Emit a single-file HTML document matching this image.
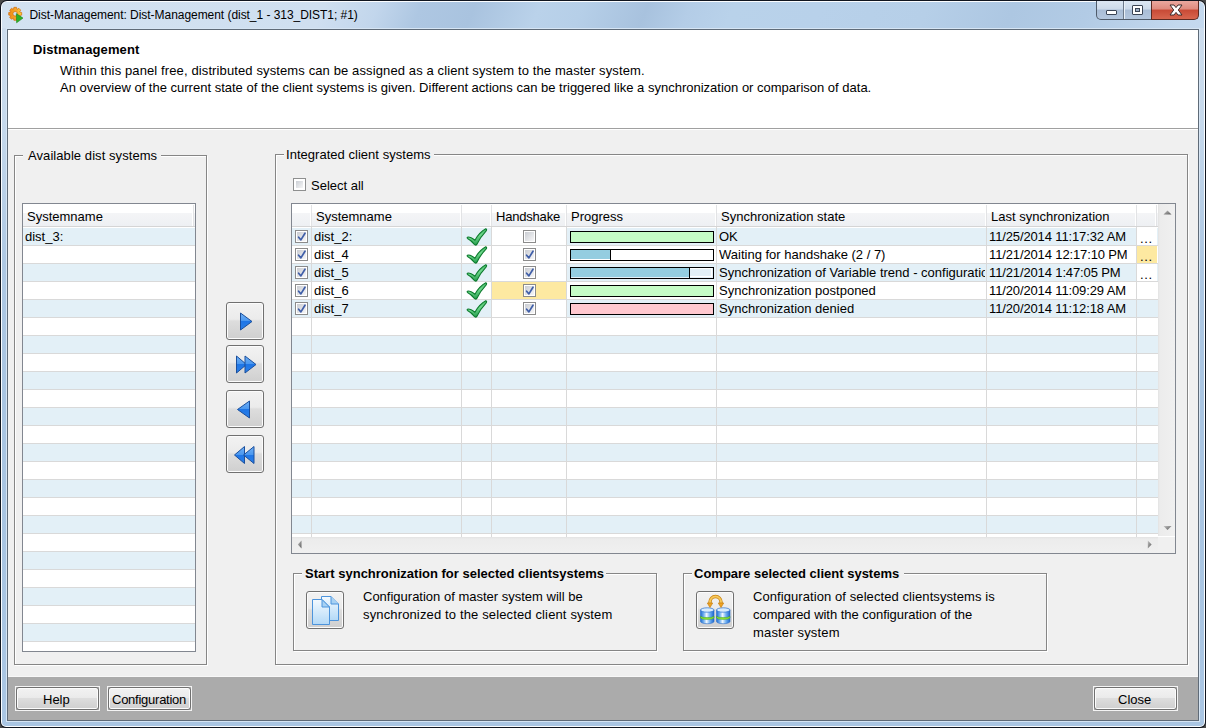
<!DOCTYPE html>
<html><head><meta charset="utf-8">
<style>
html,body{margin:0;padding:0;width:1206px;height:728px;overflow:hidden;background:#4a4a4a;}
*{box-sizing:border-box;}
.a{position:absolute;}
.t{position:absolute;white-space:pre;font-family:"Liberation Sans",sans-serif;font-size:13px;line-height:15px;color:#000;}
.b{font-weight:bold;}
#win{position:absolute;left:0;top:0;width:1206px;height:728px;border-radius:7px 7px 6px 6px;background:#10151f;}
#frame{position:absolute;left:1px;top:1px;width:1204px;height:726px;border-radius:6px 6px 5px 5px;background:#fbfdff;}
#fin{position:absolute;left:2px;top:2px;width:1202px;height:724px;border-radius:5px 5px 4px 4px;
 background:linear-gradient(#cfdeee 0px,#c6d9ec 120px,#aec8e3 260px,#a9c5e2 400px,#aac6e3 728px);}
#tbar{position:absolute;left:2px;top:2px;width:1202px;height:26px;border-radius:5px 5px 0 0;
 background:linear-gradient(112deg,#d3e2f1 0px,#cfdff0 300px,#c2d6ec 350px,#aec7e2 390px,#a9c3df 440px,#bad2ea 500px,#b6cfe8 540px,#a8c2de 600px,#b4cde7 640px,#b9d2ea 680px,#b8d1ea 760px,#b6cfe8 860px,#adc7e2 940px,#b2cbe5 1010px,#c3d8ee 1100px,#cbddf0 1206px);}
#tglow{position:absolute;left:2px;top:27px;width:1202px;height:1px;background:linear-gradient(90deg,#e2ecf6,#d4e3f2 50%,#dae7f4);}
#lite{position:absolute;left:6px;top:28px;width:1194px;height:694px;background:#d6e5f4;}
#client{position:absolute;left:7px;top:29px;width:1192px;height:692px;background:#5f6b78;}
#cin{position:absolute;left:8px;top:30px;width:1190px;height:690px;background:#f0f0f0;}
.gb{position:absolute;border:1px solid #868686;box-shadow:inset 1px 1px 0 #fff,1px 1px 0 #fff;}
.lab{position:absolute;background:#f0f0f0;}
.btn{position:absolute;border:1px solid #707070;border-radius:3px;
 background:linear-gradient(#f2f2f2 0%,#ebebeb 45%,#dddddd 50%,#cfcfcf 100%);box-shadow:inset 0 0 0 1px #fcfcfc;}
.cb{position:absolute;width:13px;height:13px;border:1px solid #8e8f8f;background:#fff;}
.cb::after{content:"";position:absolute;left:2px;top:2px;width:7px;height:7px;background:linear-gradient(135deg,#cbcfd5,#f6f6f6);}
.row{position:absolute;height:18px;border-bottom:1px solid #d9d9d9;}
.vs{position:absolute;width:1px;background:#d9d9d9;}
.pb{position:absolute;height:12px;border:2px solid #000;border-width:1px 2px 2px 1px;}
</style></head><body>
<svg width="0" height="0" style="position:absolute">
<defs>
<linearGradient id="cbg" x1="0" y1="0" x2="1" y2="1"><stop offset="0" stop-color="#c9ccd2"/><stop offset="1" stop-color="#f7f7f8"/></linearGradient>
<linearGradient id="chk" x1="0" y1="0" x2="0.3" y2="1"><stop offset="0" stop-color="#1e9a45"/><stop offset="0.55" stop-color="#6fd98d"/><stop offset="1" stop-color="#2aa050"/></linearGradient>
<linearGradient id="arr" x1="0" y1="0" x2="1" y2="1"><stop offset="0" stop-color="#c4c4c4"/><stop offset="1" stop-color="#5a5a5a"/></linearGradient>
<linearGradient id="tri" x1="0" y1="0" x2="0" y2="1"><stop offset="0" stop-color="#6fb0f5"/><stop offset="0.48" stop-color="#4a97ef"/><stop offset="0.5" stop-color="#1f76e6"/><stop offset="1" stop-color="#2a7fe8"/></linearGradient>
<linearGradient id="doc" x1="0" y1="0" x2="0" y2="1"><stop offset="0" stop-color="#f4faff"/><stop offset="1" stop-color="#b3d9f7"/></linearGradient>
<linearGradient id="db" x1="0" y1="0" x2="1" y2="0"><stop offset="0" stop-color="#1d6ad0"/><stop offset="0.25" stop-color="#78b4f0"/><stop offset="0.45" stop-color="#f0f8ff"/><stop offset="0.7" stop-color="#6fb0f2"/><stop offset="1" stop-color="#1a64cc"/></linearGradient>
</defs></svg>
<div id="win"><div id="frame"></div><div id="fin"></div><div id="tbar"></div><div id="lite"></div></div>

<!-- title icon -->
<svg class="a" style="left:0px;top:0px" width="30" height="30" viewBox="0 0 30 30">
 <defs><linearGradient id="gear" x1="0" y1="0" x2="1" y2="0"><stop offset="0" stop-color="#f08a14"/><stop offset="0.6" stop-color="#f7a928"/><stop offset="1" stop-color="#ffd23a"/></linearGradient></defs>
 <path d="M13.47,9.21 L13.89,7.33 L16.51,7.33 L16.93,9.21 L17.22,9.34 L18.85,8.30 L20.70,10.15 L19.66,11.78 L19.79,12.07 L21.67,12.49 L21.67,15.11 L19.79,15.53 L19.66,15.82 L20.70,17.45 L18.85,19.30 L17.22,18.26 L16.93,18.39 L16.51,20.27 L13.89,20.27 L13.47,18.39 L13.18,18.26 L11.55,19.30 L9.70,17.45 L10.74,15.82 L10.61,15.53 L8.73,15.11 L8.73,12.49 L10.61,12.07 L10.74,11.78 L9.70,10.15 L11.55,8.30 L13.18,9.34 Z M17.50,13.80 A2.3,2.3 0 1 0 12.90,13.80 A2.3,2.3 0 1 0 17.50,13.80 Z" fill="url(#gear)" fill-rule="evenodd" stroke="#d06a08" stroke-width="0.7" stroke-linejoin="round"/>
 <path d="M16.3,13.6 L23,18.1 L16.6,22.8 Z" fill="#2fb026" stroke="#1d8a1a" stroke-width="0.6" stroke-linejoin="round"/>
</svg>
<div class="t" style="left:29.5px;top:8px;font-size:12px;letter-spacing:-0.045px;color:#000">Dist-Management: Dist-Management (dist_1 - 313_DIST1; #1)</div>

<!-- caption buttons -->
<div class="a" style="left:1096px;top:1px;width:56px;height:19px;border:1px solid #4f5b6a;border-top:none;border-radius:0 0 0 5px;overflow:hidden;background:linear-gradient(#dce7f3 0%,#ccdaea 45%,#a9bdd6 50%,#b4c7de 100%);"></div>
<div class="a" style="left:1123px;top:1px;width:1px;height:18px;background:#6d7a8b;"></div>
<div class="a" style="left:1124px;top:1px;width:1px;height:18px;background:#e9f0f7;"></div>
<div class="a" style="left:1151px;top:1px;width:48px;height:19px;border:1px solid #5d2a22;border-top:none;border-radius:0 0 5px 0;background:linear-gradient(#eaa89f 0%,#df8a7e 45%,#c84a36 50%,#d8664f 100%);"></div>
<div class="a" style="left:1106px;top:10px;width:11px;height:5px;background:#fff;border:1px solid #3b4555;border-radius:1px;"></div>
<div class="a" style="left:1132px;top:5px;width:11px;height:10px;background:#fff;border:1px solid #3b4555;border-radius:1px;"></div>
<div class="a" style="left:1135px;top:8px;width:5px;height:4px;background:#9fb0c6;border:1px solid #3b4555;"></div>
<svg class="a" style="left:1168px;top:3px" width="16" height="14" viewBox="0 0 16 14">
 <path d="M2,2 L6,2 L8,4.6 L10,2 L14,2 L10.3,7 L14,12 L10,12 L8,9.4 L6,12 L2,12 L5.7,7 Z" fill="#fff" stroke="#3d2b2b" stroke-width="1" stroke-linejoin="round"/>
</svg>

<div id="client"></div>
<div id="cin"></div>

<!-- header panel -->
<div class="a" style="left:8px;top:30px;width:1190px;height:98px;background:#fff;"></div>
<div class="a" style="left:8px;top:128px;width:1190px;height:1px;background:#a0a0a0;"></div>
<div class="a" style="left:8px;top:129px;width:1190px;height:1px;background:#fff;"></div>
<div class="t b" style="left:33px;top:42px;letter-spacing:0.12px">Distmanagement</div>
<div class="t" style="left:60px;top:63px;letter-spacing:0.117px">Within this panel free, distributed systems can be assigned as a client system to the master system.</div>
<div class="t" style="left:60px;top:80px;">An overview of the current state of the client systems is given. Different actions can be triggered like a synchronization or comparison of data.</div>

<!-- footer -->
<div class="a" style="left:8px;top:676px;width:1190px;height:1px;background:#f8f8f8;"></div>
<div class="a" style="left:8px;top:677px;width:1190px;height:43px;background:#ababab;"></div>

<!-- left groupbox -->
<div class="gb" style="left:14px;top:155px;width:193px;height:510px;"></div>
<div class="lab" style="left:23px;top:150px;width:138px;height:10px;"></div>
<div class="t" style="left:28px;top:148px;letter-spacing:0.07px">Available dist systems</div>

<!-- left table -->
<div class="a" style="left:22px;top:203px;width:174px;height:449px;border:1px solid #828790;background:#fff;overflow:hidden;" id="lt"><div class="a" style="left:0px;top:0px;width:172px;height:22px;background:linear-gradient(#fff 0,#fff 9px,#f4f5f7 9px,#eef0f3 22px);"></div>
<div class="a" style="left:0px;top:22px;width:172px;height:1px;background:#d5d5d5;"></div>
<div class="a" style="left:169px;top:0px;width:1px;height:22px;background:#fff;"></div>
<div class="a" style="left:170px;top:1px;width:1px;height:21px;background:#e2e3e5;"></div>
<div class="t" style="left:4px;top:5px;">Systemname</div>
<div class="a" style="left:0px;top:24px;width:172px;height:17px;background:#e3f0f7;"></div>
<div class="a" style="left:0px;top:41px;width:172px;height:1px;background:#d9d9d9;"></div>
<div class="a" style="left:0px;top:42px;width:172px;height:17px;background:#fff;"></div>
<div class="a" style="left:0px;top:59px;width:172px;height:1px;background:#d9d9d9;"></div>
<div class="a" style="left:0px;top:60px;width:172px;height:17px;background:#e3f0f7;"></div>
<div class="a" style="left:0px;top:77px;width:172px;height:1px;background:#d9d9d9;"></div>
<div class="a" style="left:0px;top:78px;width:172px;height:17px;background:#fff;"></div>
<div class="a" style="left:0px;top:95px;width:172px;height:1px;background:#d9d9d9;"></div>
<div class="a" style="left:0px;top:96px;width:172px;height:17px;background:#e3f0f7;"></div>
<div class="a" style="left:0px;top:113px;width:172px;height:1px;background:#d9d9d9;"></div>
<div class="a" style="left:0px;top:114px;width:172px;height:17px;background:#fff;"></div>
<div class="a" style="left:0px;top:131px;width:172px;height:1px;background:#d9d9d9;"></div>
<div class="a" style="left:0px;top:132px;width:172px;height:17px;background:#e3f0f7;"></div>
<div class="a" style="left:0px;top:149px;width:172px;height:1px;background:#d9d9d9;"></div>
<div class="a" style="left:0px;top:150px;width:172px;height:17px;background:#fff;"></div>
<div class="a" style="left:0px;top:167px;width:172px;height:1px;background:#d9d9d9;"></div>
<div class="a" style="left:0px;top:168px;width:172px;height:17px;background:#e3f0f7;"></div>
<div class="a" style="left:0px;top:185px;width:172px;height:1px;background:#d9d9d9;"></div>
<div class="a" style="left:0px;top:186px;width:172px;height:17px;background:#fff;"></div>
<div class="a" style="left:0px;top:203px;width:172px;height:1px;background:#d9d9d9;"></div>
<div class="a" style="left:0px;top:204px;width:172px;height:17px;background:#e3f0f7;"></div>
<div class="a" style="left:0px;top:221px;width:172px;height:1px;background:#d9d9d9;"></div>
<div class="a" style="left:0px;top:222px;width:172px;height:17px;background:#fff;"></div>
<div class="a" style="left:0px;top:239px;width:172px;height:1px;background:#d9d9d9;"></div>
<div class="a" style="left:0px;top:240px;width:172px;height:17px;background:#e3f0f7;"></div>
<div class="a" style="left:0px;top:257px;width:172px;height:1px;background:#d9d9d9;"></div>
<div class="a" style="left:0px;top:258px;width:172px;height:17px;background:#fff;"></div>
<div class="a" style="left:0px;top:275px;width:172px;height:1px;background:#d9d9d9;"></div>
<div class="a" style="left:0px;top:276px;width:172px;height:17px;background:#e3f0f7;"></div>
<div class="a" style="left:0px;top:293px;width:172px;height:1px;background:#d9d9d9;"></div>
<div class="a" style="left:0px;top:294px;width:172px;height:17px;background:#fff;"></div>
<div class="a" style="left:0px;top:311px;width:172px;height:1px;background:#d9d9d9;"></div>
<div class="a" style="left:0px;top:312px;width:172px;height:17px;background:#e3f0f7;"></div>
<div class="a" style="left:0px;top:329px;width:172px;height:1px;background:#d9d9d9;"></div>
<div class="a" style="left:0px;top:330px;width:172px;height:17px;background:#fff;"></div>
<div class="a" style="left:0px;top:347px;width:172px;height:1px;background:#d9d9d9;"></div>
<div class="a" style="left:0px;top:348px;width:172px;height:17px;background:#e3f0f7;"></div>
<div class="a" style="left:0px;top:365px;width:172px;height:1px;background:#d9d9d9;"></div>
<div class="a" style="left:0px;top:366px;width:172px;height:17px;background:#fff;"></div>
<div class="a" style="left:0px;top:383px;width:172px;height:1px;background:#d9d9d9;"></div>
<div class="a" style="left:0px;top:384px;width:172px;height:17px;background:#e3f0f7;"></div>
<div class="a" style="left:0px;top:401px;width:172px;height:1px;background:#d9d9d9;"></div>
<div class="a" style="left:0px;top:402px;width:172px;height:17px;background:#fff;"></div>
<div class="a" style="left:0px;top:419px;width:172px;height:1px;background:#d9d9d9;"></div>
<div class="a" style="left:0px;top:420px;width:172px;height:17px;background:#e3f0f7;"></div>
<div class="a" style="left:0px;top:437px;width:172px;height:1px;background:#d9d9d9;"></div>
<div class="a" style="left:0px;top:438px;width:172px;height:17px;background:#fff;"></div>
<div class="a" style="left:0px;top:455px;width:172px;height:1px;background:#d9d9d9;"></div>
<div class="a" style="left:0px;top:23px;width:172px;height:1px;background:#fff;"></div>
<div class="t" style="left:2px;top:25px;">dist_3:</div></div>

<!-- arrow buttons -->
<div class="btn" style="left:226px;top:302px;width:38px;height:38px;"></div>
<div class="btn" style="left:226px;top:345px;width:38px;height:38px;"></div>
<div class="btn" style="left:226px;top:390px;width:38px;height:38px;"></div>
<div class="btn" style="left:226px;top:435px;width:38px;height:38px;"></div>

<!-- right groupbox -->
<div class="gb" style="left:275px;top:154px;width:913px;height:511px;"></div>
<div class="lab" style="left:284px;top:148px;width:150px;height:12px;"></div>
<div class="t" style="left:286px;top:147px;letter-spacing:0.03px">Integrated client systems</div>

<div class="cb" style="left:293px;top:178px;"></div>
<div class="t" style="left:311px;top:178px;">Select all</div>

<!-- right table -->
<div class="a" style="left:291px;top:203px;width:885px;height:351px;border:1px solid #828790;background:#fff;overflow:hidden;" id="rt"><div class="a" style="left:0px;top:0px;width:866px;height:22px;background:linear-gradient(#fff 0,#fff 9px,#f4f5f7 9px,#eef0f3 22px);"></div>
<div class="a" style="left:0px;top:22px;width:866px;height:1px;background:#d5d5d5;"></div>
<div class="a" style="left:18px;top:0px;width:1px;height:22px;background:#fff;"></div>
<div class="a" style="left:19px;top:1px;width:1px;height:21px;background:#e2e3e5;"></div>
<div class="a" style="left:168px;top:0px;width:1px;height:22px;background:#fff;"></div>
<div class="a" style="left:169px;top:1px;width:1px;height:21px;background:#e2e3e5;"></div>
<div class="a" style="left:198px;top:0px;width:1px;height:22px;background:#fff;"></div>
<div class="a" style="left:199px;top:1px;width:1px;height:21px;background:#e2e3e5;"></div>
<div class="a" style="left:273px;top:0px;width:1px;height:22px;background:#fff;"></div>
<div class="a" style="left:274px;top:1px;width:1px;height:21px;background:#e2e3e5;"></div>
<div class="a" style="left:423px;top:0px;width:1px;height:22px;background:#fff;"></div>
<div class="a" style="left:424px;top:1px;width:1px;height:21px;background:#e2e3e5;"></div>
<div class="a" style="left:693px;top:0px;width:1px;height:22px;background:#fff;"></div>
<div class="a" style="left:694px;top:1px;width:1px;height:21px;background:#e2e3e5;"></div>
<div class="a" style="left:843px;top:0px;width:1px;height:22px;background:#fff;"></div>
<div class="a" style="left:844px;top:1px;width:1px;height:21px;background:#e2e3e5;"></div>
<div class="a" style="left:863px;top:0px;width:1px;height:22px;background:#fff;"></div>
<div class="a" style="left:864px;top:1px;width:1px;height:21px;background:#e2e3e5;"></div>
<div class="t" style="left:24px;top:5px;">Systemname</div>
<div class="t" style="left:204px;top:5px;letter-spacing:-0.2px">Handshake</div>
<div class="t" style="left:279px;top:5px;">Progress</div>
<div class="t" style="left:429px;top:5px;">Synchronization state</div>
<div class="t" style="left:699px;top:5px;">Last synchronization</div>
<div class="a" style="left:0px;top:24px;width:866px;height:17px;background:#e3f0f7;"></div>
<div class="a" style="left:0px;top:41px;width:866px;height:1px;background:#d9d9d9;"></div>
<div class="a" style="left:0px;top:42px;width:866px;height:17px;background:#fff;"></div>
<div class="a" style="left:0px;top:59px;width:866px;height:1px;background:#d9d9d9;"></div>
<div class="a" style="left:0px;top:60px;width:866px;height:17px;background:#e3f0f7;"></div>
<div class="a" style="left:0px;top:77px;width:866px;height:1px;background:#d9d9d9;"></div>
<div class="a" style="left:0px;top:78px;width:866px;height:17px;background:#fff;"></div>
<div class="a" style="left:0px;top:95px;width:866px;height:1px;background:#d9d9d9;"></div>
<div class="a" style="left:0px;top:96px;width:866px;height:17px;background:#e3f0f7;"></div>
<div class="a" style="left:0px;top:113px;width:866px;height:1px;background:#d9d9d9;"></div>
<div class="a" style="left:0px;top:114px;width:866px;height:17px;background:#fff;"></div>
<div class="a" style="left:0px;top:131px;width:866px;height:1px;background:#d9d9d9;"></div>
<div class="a" style="left:0px;top:132px;width:866px;height:17px;background:#e3f0f7;"></div>
<div class="a" style="left:0px;top:149px;width:866px;height:1px;background:#d9d9d9;"></div>
<div class="a" style="left:0px;top:150px;width:866px;height:17px;background:#fff;"></div>
<div class="a" style="left:0px;top:167px;width:866px;height:1px;background:#d9d9d9;"></div>
<div class="a" style="left:0px;top:168px;width:866px;height:17px;background:#e3f0f7;"></div>
<div class="a" style="left:0px;top:185px;width:866px;height:1px;background:#d9d9d9;"></div>
<div class="a" style="left:0px;top:186px;width:866px;height:17px;background:#fff;"></div>
<div class="a" style="left:0px;top:203px;width:866px;height:1px;background:#d9d9d9;"></div>
<div class="a" style="left:0px;top:204px;width:866px;height:17px;background:#e3f0f7;"></div>
<div class="a" style="left:0px;top:221px;width:866px;height:1px;background:#d9d9d9;"></div>
<div class="a" style="left:0px;top:222px;width:866px;height:17px;background:#fff;"></div>
<div class="a" style="left:0px;top:239px;width:866px;height:1px;background:#d9d9d9;"></div>
<div class="a" style="left:0px;top:240px;width:866px;height:17px;background:#e3f0f7;"></div>
<div class="a" style="left:0px;top:257px;width:866px;height:1px;background:#d9d9d9;"></div>
<div class="a" style="left:0px;top:258px;width:866px;height:17px;background:#fff;"></div>
<div class="a" style="left:0px;top:275px;width:866px;height:1px;background:#d9d9d9;"></div>
<div class="a" style="left:0px;top:276px;width:866px;height:17px;background:#e3f0f7;"></div>
<div class="a" style="left:0px;top:293px;width:866px;height:1px;background:#d9d9d9;"></div>
<div class="a" style="left:0px;top:294px;width:866px;height:17px;background:#fff;"></div>
<div class="a" style="left:0px;top:311px;width:866px;height:1px;background:#d9d9d9;"></div>
<div class="a" style="left:0px;top:312px;width:866px;height:17px;background:#e3f0f7;"></div>
<div class="a" style="left:0px;top:329px;width:866px;height:1px;background:#d9d9d9;"></div>
<div class="a" style="left:0px;top:330px;width:866px;height:17px;background:#fff;"></div>
<div class="a" style="left:0px;top:347px;width:866px;height:1px;background:#d9d9d9;"></div>
<div class="a" style="left:0px;top:23px;width:866px;height:1px;background:#fff;"></div>
<div class="a" style="left:0px;top:330px;width:866px;height:3px;background:#fff;"></div>
<div class="a" style="left:200px;top:24px;width:74px;height:17px;background:#fff;"></div>
<div class="a" style="left:200px;top:42px;width:74px;height:17px;background:#fff;"></div>
<div class="a" style="left:200px;top:60px;width:74px;height:17px;background:#fff;"></div>
<div class="a" style="left:200px;top:78px;width:74px;height:17px;background:#fde9a1;"></div>
<div class="a" style="left:200px;top:96px;width:74px;height:17px;background:#fff;"></div>
<div class="a" style="left:845px;top:24px;width:20px;height:17px;background:#fff;"></div>
<div class="a" style="left:845px;top:42px;width:20px;height:17px;background:#fde9a1;"></div>
<div class="a" style="left:845px;top:60px;width:20px;height:17px;background:#fff;"></div>
<div class="a" style="left:19px;top:23px;width:1px;height:310px;background:#d9d9d9;"></div>
<div class="a" style="left:169px;top:23px;width:1px;height:310px;background:#d9d9d9;"></div>
<div class="a" style="left:199px;top:23px;width:1px;height:310px;background:#d9d9d9;"></div>
<div class="a" style="left:274px;top:23px;width:1px;height:310px;background:#d9d9d9;"></div>
<div class="a" style="left:424px;top:23px;width:1px;height:310px;background:#d9d9d9;"></div>
<div class="a" style="left:694px;top:23px;width:1px;height:310px;background:#d9d9d9;"></div>
<div class="a" style="left:844px;top:23px;width:1px;height:310px;background:#d9d9d9;"></div>
<svg class="a" style="left:3px;top:26px" width="13" height="13" viewBox="0 0 13 13"><rect x="0.5" y="0.5" width="12" height="12" fill="#fff" stroke="#8b8b8b"/><rect x="2" y="2" width="9" height="9" fill="url(#cbg)"/><path d="M3.6,7.2 L5.9,9.9 L10,3.2" fill="none" stroke="#3f5ea8" stroke-width="1.7" stroke-linecap="round" stroke-linejoin="round"/></svg>
<div class="t" style="left:22px;top:25px;">dist_2:</div>
<svg class="a" style="left:174px;top:24px" width="22" height="18" viewBox="0 0 22 18"><path d="M1.5,9.2 C3.2,8.6 5.8,9.9 8.9,12.2 C11.6,7.6 15.6,3 19.8,0.8 C20.8,1.1 20.8,2.2 20.2,2.8 C16.2,7 13.2,11.5 10.8,16.4 C10.2,17.3 9,17.3 8.4,16.5 C6.4,13.8 3.9,11.6 1.5,10.4 C1,10 1,9.5 1.5,9.2 Z" fill="url(#chk)" stroke="#0b7a2c" stroke-width="1.1"/></svg>
<svg class="a" style="left:231px;top:26px" width="13" height="13" viewBox="0 0 13 13"><rect x="0.5" y="0.5" width="12" height="12" fill="#fff" stroke="#8b8b8b"/><rect x="2" y="2" width="9" height="9" fill="url(#cbg)"/></svg>
<div class="a" style="left:278px;top:27px;width:144px;height:12px;border:1px solid #000;background:#c5fcc6;"></div>
<div class="t" style="left:427px;top:25px;width:266px;overflow:hidden;">OK</div>
<div class="t" style="left:697px;top:25px;letter-spacing:-0.13px">11/25/2014 11:17:32 AM</div>
<div class="t" style="left:848px;top:27px;letter-spacing:0.6px">...</div>
<svg class="a" style="left:3px;top:44px" width="13" height="13" viewBox="0 0 13 13"><rect x="0.5" y="0.5" width="12" height="12" fill="#fff" stroke="#8b8b8b"/><rect x="2" y="2" width="9" height="9" fill="url(#cbg)"/><path d="M3.6,7.2 L5.9,9.9 L10,3.2" fill="none" stroke="#3f5ea8" stroke-width="1.7" stroke-linecap="round" stroke-linejoin="round"/></svg>
<div class="t" style="left:22px;top:43px;">dist_4</div>
<svg class="a" style="left:174px;top:42px" width="22" height="18" viewBox="0 0 22 18"><path d="M1.5,9.2 C3.2,8.6 5.8,9.9 8.9,12.2 C11.6,7.6 15.6,3 19.8,0.8 C20.8,1.1 20.8,2.2 20.2,2.8 C16.2,7 13.2,11.5 10.8,16.4 C10.2,17.3 9,17.3 8.4,16.5 C6.4,13.8 3.9,11.6 1.5,10.4 C1,10 1,9.5 1.5,9.2 Z" fill="url(#chk)" stroke="#0b7a2c" stroke-width="1.1"/></svg>
<svg class="a" style="left:231px;top:44px" width="13" height="13" viewBox="0 0 13 13"><rect x="0.5" y="0.5" width="12" height="12" fill="#fff" stroke="#8b8b8b"/><rect x="2" y="2" width="9" height="9" fill="url(#cbg)"/><path d="M3.6,7.2 L5.9,9.9 L10,3.2" fill="none" stroke="#3f5ea8" stroke-width="1.7" stroke-linecap="round" stroke-linejoin="round"/></svg>
<div class="a" style="left:278px;top:45px;width:144px;height:12px;border:1px solid #000;background:#fff;"></div>
<div class="a" style="left:279px;top:46px;width:39px;height:9px;background:#94cde0;"></div>
<div class="a" style="left:318px;top:45px;width:1px;height:11px;background:#000;"></div>
<div class="t" style="left:427px;top:43px;width:266px;overflow:hidden;">Waiting for handshake (2 / 7)</div>
<div class="t" style="left:697px;top:43px;letter-spacing:-0.13px">11/21/2014 12:17:10 PM</div>
<div class="t" style="left:848px;top:45px;letter-spacing:0.6px">...</div>
<svg class="a" style="left:3px;top:62px" width="13" height="13" viewBox="0 0 13 13"><rect x="0.5" y="0.5" width="12" height="12" fill="#fff" stroke="#8b8b8b"/><rect x="2" y="2" width="9" height="9" fill="url(#cbg)"/><path d="M3.6,7.2 L5.9,9.9 L10,3.2" fill="none" stroke="#3f5ea8" stroke-width="1.7" stroke-linecap="round" stroke-linejoin="round"/></svg>
<div class="t" style="left:22px;top:61px;">dist_5</div>
<svg class="a" style="left:174px;top:60px" width="22" height="18" viewBox="0 0 22 18"><path d="M1.5,9.2 C3.2,8.6 5.8,9.9 8.9,12.2 C11.6,7.6 15.6,3 19.8,0.8 C20.8,1.1 20.8,2.2 20.2,2.8 C16.2,7 13.2,11.5 10.8,16.4 C10.2,17.3 9,17.3 8.4,16.5 C6.4,13.8 3.9,11.6 1.5,10.4 C1,10 1,9.5 1.5,9.2 Z" fill="url(#chk)" stroke="#0b7a2c" stroke-width="1.1"/></svg>
<svg class="a" style="left:231px;top:62px" width="13" height="13" viewBox="0 0 13 13"><rect x="0.5" y="0.5" width="12" height="12" fill="#fff" stroke="#8b8b8b"/><rect x="2" y="2" width="9" height="9" fill="url(#cbg)"/><path d="M3.6,7.2 L5.9,9.9 L10,3.2" fill="none" stroke="#3f5ea8" stroke-width="1.7" stroke-linecap="round" stroke-linejoin="round"/></svg>
<div class="a" style="left:278px;top:63px;width:144px;height:12px;border:1px solid #000;background:#e3f0f7;"></div>
<div class="a" style="left:279px;top:64px;width:141px;height:9px;border:1px solid #fff;"></div>
<div class="a" style="left:279px;top:64px;width:118px;height:9px;background:#94cde0;"></div>
<div class="a" style="left:397px;top:63px;width:1px;height:11px;background:#000;"></div>
<div class="t" style="left:427px;top:61px;width:266px;overflow:hidden;">Synchronization of Variable trend - configuration</div>
<div class="t" style="left:697px;top:61px;letter-spacing:-0.13px">11/21/2014 1:47:05 PM</div>
<div class="t" style="left:848px;top:63px;letter-spacing:0.6px">...</div>
<svg class="a" style="left:3px;top:80px" width="13" height="13" viewBox="0 0 13 13"><rect x="0.5" y="0.5" width="12" height="12" fill="#fff" stroke="#8b8b8b"/><rect x="2" y="2" width="9" height="9" fill="url(#cbg)"/><path d="M3.6,7.2 L5.9,9.9 L10,3.2" fill="none" stroke="#3f5ea8" stroke-width="1.7" stroke-linecap="round" stroke-linejoin="round"/></svg>
<div class="t" style="left:22px;top:79px;">dist_6</div>
<svg class="a" style="left:174px;top:78px" width="22" height="18" viewBox="0 0 22 18"><path d="M1.5,9.2 C3.2,8.6 5.8,9.9 8.9,12.2 C11.6,7.6 15.6,3 19.8,0.8 C20.8,1.1 20.8,2.2 20.2,2.8 C16.2,7 13.2,11.5 10.8,16.4 C10.2,17.3 9,17.3 8.4,16.5 C6.4,13.8 3.9,11.6 1.5,10.4 C1,10 1,9.5 1.5,9.2 Z" fill="url(#chk)" stroke="#0b7a2c" stroke-width="1.1"/></svg>
<svg class="a" style="left:231px;top:80px" width="13" height="13" viewBox="0 0 13 13"><rect x="0.5" y="0.5" width="12" height="12" fill="#fff" stroke="#8b8b8b"/><rect x="2" y="2" width="9" height="9" fill="url(#cbg)"/><path d="M3.6,7.2 L5.9,9.9 L10,3.2" fill="none" stroke="#3f5ea8" stroke-width="1.7" stroke-linecap="round" stroke-linejoin="round"/></svg>
<div class="a" style="left:278px;top:81px;width:144px;height:12px;border:1px solid #000;background:#c5fcc6;"></div>
<div class="t" style="left:427px;top:79px;width:266px;overflow:hidden;">Synchronization postponed</div>
<div class="t" style="left:697px;top:79px;letter-spacing:-0.13px">11/20/2014 11:09:29 AM</div>
<svg class="a" style="left:3px;top:98px" width="13" height="13" viewBox="0 0 13 13"><rect x="0.5" y="0.5" width="12" height="12" fill="#fff" stroke="#8b8b8b"/><rect x="2" y="2" width="9" height="9" fill="url(#cbg)"/><path d="M3.6,7.2 L5.9,9.9 L10,3.2" fill="none" stroke="#3f5ea8" stroke-width="1.7" stroke-linecap="round" stroke-linejoin="round"/></svg>
<div class="t" style="left:22px;top:97px;">dist_7</div>
<svg class="a" style="left:174px;top:96px" width="22" height="18" viewBox="0 0 22 18"><path d="M1.5,9.2 C3.2,8.6 5.8,9.9 8.9,12.2 C11.6,7.6 15.6,3 19.8,0.8 C20.8,1.1 20.8,2.2 20.2,2.8 C16.2,7 13.2,11.5 10.8,16.4 C10.2,17.3 9,17.3 8.4,16.5 C6.4,13.8 3.9,11.6 1.5,10.4 C1,10 1,9.5 1.5,9.2 Z" fill="url(#chk)" stroke="#0b7a2c" stroke-width="1.1"/></svg>
<svg class="a" style="left:231px;top:98px" width="13" height="13" viewBox="0 0 13 13"><rect x="0.5" y="0.5" width="12" height="12" fill="#fff" stroke="#8b8b8b"/><rect x="2" y="2" width="9" height="9" fill="url(#cbg)"/><path d="M3.6,7.2 L5.9,9.9 L10,3.2" fill="none" stroke="#3f5ea8" stroke-width="1.7" stroke-linecap="round" stroke-linejoin="round"/></svg>
<div class="a" style="left:278px;top:99px;width:144px;height:12px;border:1px solid #000;background:#ffc8cf;"></div>
<div class="t" style="left:427px;top:97px;width:266px;overflow:hidden;">Synchronization denied</div>
<div class="t" style="left:697px;top:97px;letter-spacing:-0.13px">11/20/2014 11:12:18 AM</div>
<div class="a" style="left:866px;top:0px;width:17px;height:332px;background:linear-gradient(90deg,#e3e3e3 0,#ececec 2px,#f0f0f0 100%);"></div>
<div class="a" style="left:866px;top:333px;width:17px;height:16px;background:#f0f0f0;"></div>
<svg class="a" style="left:871px;top:6px" width="9" height="6" viewBox="0 0 9 6"><path d="M0.5,4.5 L4.5,0.5 L8.5,4.5 Z" fill="url(#arr)"/></svg>
<svg class="a" style="left:871px;top:321px" width="9" height="6" viewBox="0 0 9 6"><path d="M0.5,1 L4.5,5 L8.5,1 Z" fill="url(#arr)"/></svg>
<div class="a" style="left:0px;top:333px;width:866px;height:16px;background:linear-gradient(#e3e3e3 0,#ececec 2px,#f0f0f0 100%);"></div>
<svg class="a" style="left:5px;top:336px" width="6" height="9" viewBox="0 0 6 9"><path d="M4.5,0.5 L0.8,4.5 L4.5,8.5 Z" fill="url(#arr)"/></svg>
<svg class="a" style="left:855px;top:336px" width="6" height="9" viewBox="0 0 6 9"><path d="M0.8,0.5 L4.6,4.5 L0.8,8.5 Z" fill="url(#arr)"/></svg></div>

<!-- sub groupboxes -->
<div class="gb" style="left:293px;top:573px;width:364px;height:78px;"></div>
<div class="lab" style="left:302px;top:566px;width:304px;height:12px;"></div>
<div class="t b" style="left:305px;top:566px;">Start synchronization for selected clientsystems</div>
<div class="btn" style="left:306px;top:591px;width:38px;height:38px;"></div>
<div class="t" style="left:363px;top:589px;">Configuration of master system will be</div>
<div class="t" style="left:363px;top:607px;letter-spacing:0.14px">synchronized to the selected client system</div>

<div class="gb" style="left:683px;top:573px;width:364px;height:78px;"></div>
<div class="lab" style="left:692px;top:566px;width:212px;height:12px;"></div>
<div class="t b" style="left:694px;top:566px;">Compare selected client systems</div>
<div class="btn" style="left:696px;top:591px;width:38px;height:38px;"></div>
<div class="t" style="left:753px;top:589px;letter-spacing:0.08px">Configuration of selected clientsystems is</div>
<div class="t" style="left:753px;top:607px;letter-spacing:-0.03px">compared with the configuration of the</div>
<div class="t" style="left:753px;top:625px;letter-spacing:0.17px">master system</div>


<!-- arrow icons -->
<svg class="a" style="left:226px;top:302px" width="38" height="38" viewBox="226 302 38 38">
 <path d="M240.5,313 L252,321.5 L240.5,330 Z" fill="url(#tri)" stroke="#1b4f9c" stroke-width="1" stroke-linejoin="round"/>
</svg>
<svg class="a" style="left:226px;top:345px" width="38" height="38" viewBox="226 345 38 38">
 <path d="M236.5,356 L246.5,364.5 L236.5,373 Z" fill="url(#tri)" stroke="#1b4f9c" stroke-width="1" stroke-linejoin="round"/>
 <path d="M245,356 L256,364.5 L245,373 Z" fill="url(#tri)" stroke="#1b4f9c" stroke-width="1" stroke-linejoin="round"/>
</svg>
<svg class="a" style="left:226px;top:390px" width="38" height="38" viewBox="226 390 38 38">
 <path d="M249.5,401 L237.5,409.5 L249.5,418 Z" fill="url(#tri)" stroke="#1b4f9c" stroke-width="1" stroke-linejoin="round"/>
</svg>
<svg class="a" style="left:226px;top:435px" width="38" height="38" viewBox="226 435 38 38">
 <path d="M244.5,446.5 L234.5,455 L244.5,463.5 Z" fill="url(#tri)" stroke="#1b4f9c" stroke-width="1" stroke-linejoin="round"/>
 <path d="M254,446.5 L243.5,455 L254,463.5 Z" fill="url(#tri)" stroke="#1b4f9c" stroke-width="1" stroke-linejoin="round"/>
</svg>
<!-- docs icon -->
<svg class="a" style="left:306px;top:591px" width="38" height="38" viewBox="306 591 38 38">
 <path d="M321.5,596.5 L331,596.5 L338.5,604 L338.5,620.5 L321.5,620.5 Z" fill="url(#doc)" stroke="#4d94dc" stroke-width="1" stroke-linejoin="round"/>
 <path d="M331,596.5 L331,604 L338.5,604" fill="#a8d2f4" stroke="#4d94dc" stroke-width="1" stroke-linejoin="round"/>
 <path d="M312.5,599.5 L322,599.5 L329.5,607 L329.5,624.5 L312.5,624.5 Z" fill="url(#doc)" stroke="#4d94dc" stroke-width="1" stroke-linejoin="round"/>
 <path d="M322,599.5 L322,607 L329.5,607 Z" fill="#a8d2f4" stroke="#4d94dc" stroke-width="1" stroke-linejoin="round"/>
</svg>
<!-- db icon -->
<svg class="a" style="left:696px;top:591px" width="38" height="38" viewBox="696 591 38 38">
 <path d="M700.5,610 L700.5,621.5 A6.75,2.2 0 0 0 714,621.5 L714,610 Z" fill="url(#db)" stroke="#2a6fcf" stroke-width="0.6"/>
 <path d="M700.6,616.2 A6.7,1.6 0 0 0 713.9,616.2 L713.9,618 A6.7,1.6 0 0 1 700.6,618 Z" fill="#8ee832" stroke="#3f9a1a" stroke-width="0.5"/>
 <ellipse cx="707.25" cy="610" rx="6.75" ry="2.2" fill="#d8ecfd" stroke="#2a6fcf" stroke-width="0.7"/>
 <path d="M716.5,610 L716.5,621.5 A6.75,2.2 0 0 0 730,621.5 L730,610 Z" fill="url(#db)" stroke="#2a6fcf" stroke-width="0.6"/>
 <path d="M716.6,616.2 A6.7,1.6 0 0 0 729.9,616.2 L729.9,618 A6.7,1.6 0 0 1 716.6,618 Z" fill="#8ee832" stroke="#3f9a1a" stroke-width="0.5"/>
 <ellipse cx="723.25" cy="610" rx="6.75" ry="2.2" fill="#d8ecfd" stroke="#2a6fcf" stroke-width="0.7"/>
 <path d="M710,603.5 L710,602 A5.5,5.5 0 0 1 721,602 L721,603.5" fill="none" stroke="#c98310" stroke-width="3.4"/>
 <path d="M710,603.5 L710,602 A5.5,5.5 0 0 1 721,602 L721,603.5" fill="none" stroke="#f8c85a" stroke-width="1.8"/>
 <path d="M707.3,603 L712.7,603 L710,607.5 Z M718.3,603 L723.7,603 L721,607.5 Z" fill="#f2a322" stroke="#c47f10" stroke-width="0.7" stroke-linejoin="round"/>
</svg>
<!-- footer buttons -->
<div class="a" style="left:15px;top:686px;width:85px;height:25px;border:1px solid #f4f4f4;"></div>
<div class="btn" style="left:16px;top:687px;width:83px;height:23px;"></div>
<div class="t" style="left:43px;top:692px;">Help</div>
<div class="a" style="left:107px;top:686px;width:85px;height:25px;border:1px solid #f4f4f4;"></div>
<div class="btn" style="left:108px;top:687px;width:83px;height:23px;"></div>
<div class="t" style="left:112px;top:692px;letter-spacing:-0.25px">Configuration</div>
<div class="a" style="left:1093px;top:686px;width:85px;height:25px;border:1px solid #f4f4f4;"></div>
<div class="btn" style="left:1094px;top:687px;width:83px;height:23px;"></div>
<div class="t" style="left:1118px;top:692px;">Close</div>

</body></html>
